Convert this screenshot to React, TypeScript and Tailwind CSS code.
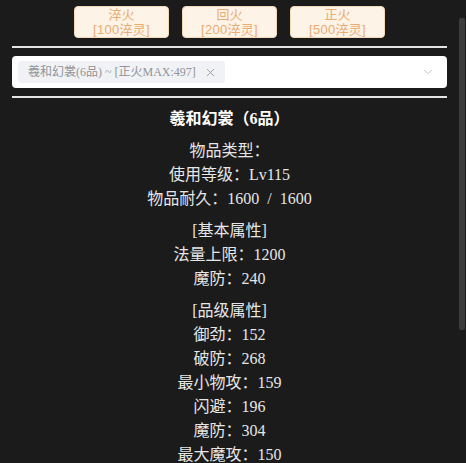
import { ChevronDown, X } from "lucide-react";

const font = { fontFamily: '"Liberation Serif", "Noto Sans CJK SC", serif' };
const sans = { fontFamily: '"Liberation Sans", "Noto Sans CJK SC", sans-serif' };

const buttons = [
  { name: "淬火", cost: "[100淬灵]" },
  { name: "回火", cost: "[200淬灵]" },
  { name: "正火", cost: "[500淬灵]" },
];

const sections: string[][] = [
  ["物品类型：", "使用等级：Lv115", "物品耐久：1600 / 1600"],
  ["[基本属性]", "法量上限：1200", "魔防：240"],
  ["[品级属性]", "御劲：152", "破防：268", "最小物攻：159", "闪避：196", "魔防：304", "最大魔攻：150"],
];

export default function App() {
  return (
    <div className="relative h-[463px] overflow-hidden bg-[#1b1b1b] pl-3 pr-[19px] text-[#e6e6e6]" style={font}>
      <div className="flex justify-center gap-[13px] pt-[6px]" style={sans}>
        {buttons.map((b) => (
          <button
            key={b.name}
            type="button"
            className="flex h-[32px] w-[95px] flex-col items-center justify-center rounded-[4px] border border-[#f3d9b8] bg-[#fdf3e6] text-[13px] leading-[15px] text-[#eaab72]"
          >
            <span>{b.name}</span>
            <span className="tracking-[0.3px]">{b.cost}</span>
          </button>
        ))}
      </div>

      <div className="mt-[8px] h-[2px] bg-[#e4e4e4]" />

      <div className="mt-[8px] flex h-[32px] items-center rounded-[4px] bg-white pl-[6px] pr-[12px]">
        <span className="flex h-[22px] items-center gap-[8px] rounded-[3px] bg-[#f0f2f5] pl-[10px] pr-[8px] text-[12px] text-[#909399]">
          羲和幻裳(6品) ~ [正火MAX:497]
          <X className="h-[13px] w-[13px]" strokeWidth={1.6} />
        </span>
        <ChevronDown className="ml-auto h-[14px] w-[14px] text-[#b8bcc4]" strokeWidth={1.5} />
      </div>

      <div className="mt-[8px] h-[2px] bg-[#e4e4e4]" />

      <div className="flex flex-col items-center text-[16px] leading-[24px] [word-spacing:4px]">
        <div className="mt-[9px] font-bold text-white">羲和幻裳（6品）</div>
        {sections.map((s, i) => (
          <div key={i} className="mt-[8px] flex flex-col items-center">
            {s.map((line) => (
              <div key={line}>{line}</div>
            ))}
          </div>
        ))}
      </div>

      <div className="absolute right-[1px] top-[18px] h-[312px] w-[6px] rounded-[2px] bg-[#3c3c3c]" />
    </div>
  );
}
